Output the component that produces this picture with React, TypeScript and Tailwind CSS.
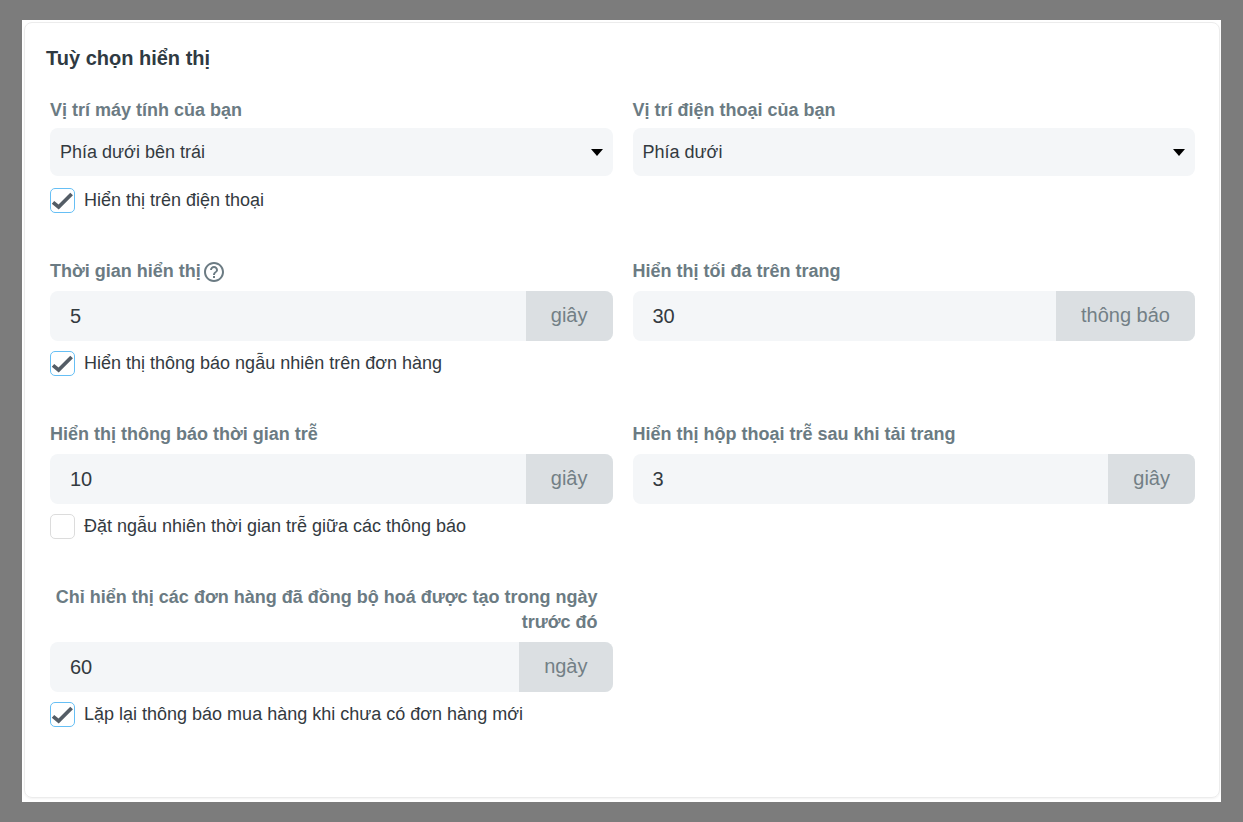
import { useState } from 'react';
import type { ReactNode } from 'react';
import { MdHelpOutline } from 'react-icons/md';

function FieldLabel({ htmlFor, children }: { htmlFor: string; children: ReactNode }) {
  return (
    <label htmlFor={htmlFor} className="text-lg leading-[25px] font-bold text-[#6b7b83]">
      {children}
    </label>
  );
}

function SelectField({ id, label, options }: { id: string; label: string; options: string[] }) {
  const [value, setValue] = useState(options[0]);

  return (
    <div className="flex flex-col gap-[5px]">
      <FieldLabel htmlFor={id}>{label}</FieldLabel>
      <div className="relative">
        <select
          id={id}
          value={value}
          onChange={(e) => setValue(e.target.value)}
          className="h-12 w-full appearance-none rounded-lg bg-[#f4f6f8] pr-10 pl-[10px] text-lg text-[#333a3f]"
        >
          {options.map((option) => (
            <option key={option}>{option}</option>
          ))}
        </select>
        <svg
          viewBox="0 0 12 6"
          className="pointer-events-none absolute top-[21px] right-[10px] h-[7px] w-3"
          preserveAspectRatio="none"
        >
          <path d="M0 0h12L6 6z" fill="#000" />
        </svg>
      </div>
    </div>
  );
}

function UnitInput({ id, initial, unit }: { id: string; initial: string; unit: string }) {
  const [value, setValue] = useState(initial);

  return (
    <div className="flex h-[50px] overflow-hidden rounded-lg bg-[#f4f6f8]">
      <input
        id={id}
        type="text"
        inputMode="numeric"
        value={value}
        onChange={(e) => setValue(e.target.value)}
        className="min-w-0 flex-1 bg-transparent px-5 text-xl text-[#333a3f]"
      />
      <span className="flex items-center bg-[#dbdfe2] px-[25px] pb-[2px] text-xl text-[#737f86]">
        {unit}
      </span>
    </div>
  );
}

function CheckOption({ label, initial }: { label: string; initial: boolean }) {
  const [checked, setChecked] = useState(initial);

  return (
    <label className="flex items-start gap-[9px] self-start text-lg leading-[25px] text-[#333a3f]">
      <span className="relative flex size-[25px] shrink-0">
        <input
          type="checkbox"
          checked={checked}
          onChange={(e) => setChecked(e.target.checked)}
          className="size-full appearance-none rounded-[5px] border border-[#dcdcdc] bg-white checked:border-[#66bff5]"
        />
        {checked && (
          <svg viewBox="0 0 25 25" className="pointer-events-none absolute inset-0">
            <path d="M3 14.4L8.6 19L21.6 6" fill="none" stroke="#545d66" strokeWidth="3.8" />
          </svg>
        )}
      </span>
      {label}
    </label>
  );
}

export default function App() {
  return (
    <div className="min-h-screen bg-[#7c7c7c] px-[22px] py-5 font-['Liberation_Sans',Arial,sans-serif]">
      <main className="bg-white pt-[2px] pr-px pb-1 pl-[2px]">
        <section className="rounded-lg border border-[#ececec] pt-[21px] pr-5 pb-[70px] pl-[21px] shadow-xs">
          <h1 className="text-xl leading-7 font-bold text-[#2f3a42]">Tuỳ chọn hiển thị</h1>

          <div className="mt-[26px] grid grid-cols-2 gap-x-5 gap-y-[46px] px-1">
            {/* Position */}
            <div className="flex flex-col gap-3">
              <SelectField
                id="desktop-position"
                label="Vị trí máy tính của bạn"
                options={['Phía dưới bên trái', 'Phía dưới bên phải']}
              />
              <CheckOption label="Hiển thị trên điện thoại" initial={true} />
            </div>
            <SelectField
              id="mobile-position"
              label="Vị trí điện thoại của bạn"
              options={['Phía dưới', 'Phía trên']}
            />

            {/* Display time */}
            <div className="flex flex-col gap-[10px]">
              <div className="flex flex-col gap-[7px]">
                <div className="flex h-[25px] items-center gap-px">
                  <FieldLabel htmlFor="display-time">Thời gian hiển thị</FieldLabel>
                  <MdHelpOutline className="size-6 text-[#6b7b83]" />
                </div>
                <UnitInput id="display-time" initial="5" unit="giây" />
              </div>
              <CheckOption label="Hiển thị thông báo ngẫu nhiên trên đơn hàng" initial={true} />
            </div>
            <div className="flex flex-col gap-[7px]">
              <FieldLabel htmlFor="max-per-page">Hiển thị tối đa trên trang</FieldLabel>
              <UnitInput id="max-per-page" initial="30" unit="thông báo" />
            </div>

            {/* Delays */}
            <div className="flex flex-col gap-[10px]">
              <div className="flex flex-col gap-[7px]">
                <FieldLabel htmlFor="delay-time">Hiển thị thông báo thời gian trễ</FieldLabel>
                <UnitInput id="delay-time" initial="10" unit="giây" />
              </div>
              <CheckOption label="Đặt ngẫu nhiên thời gian trễ giữa các thông báo" initial={false} />
            </div>
            <div className="flex flex-col gap-[7px]">
              <FieldLabel htmlFor="initial-delay">Hiển thị hộp thoại trễ sau khi tải trang</FieldLabel>
              <UnitInput id="initial-delay" initial="3" unit="giây" />
            </div>

            {/* Synced orders */}
            <div className="flex flex-col gap-[10px]">
              <div className="flex flex-col gap-[7px]">
                <div className="flex justify-end pr-[15px] text-right">
                  <FieldLabel htmlFor="order-days">
                    Chỉ hiển thị các đơn hàng đã đồng bộ hoá được tạo trong ngày trước đó
                  </FieldLabel>
                </div>
                <UnitInput id="order-days" initial="60" unit="ngày" />
              </div>
              <CheckOption label="Lặp lại thông báo mua hàng khi chưa có đơn hàng mới" initial={true} />
            </div>
          </div>
        </section>
      </main>
    </div>
  );
}
